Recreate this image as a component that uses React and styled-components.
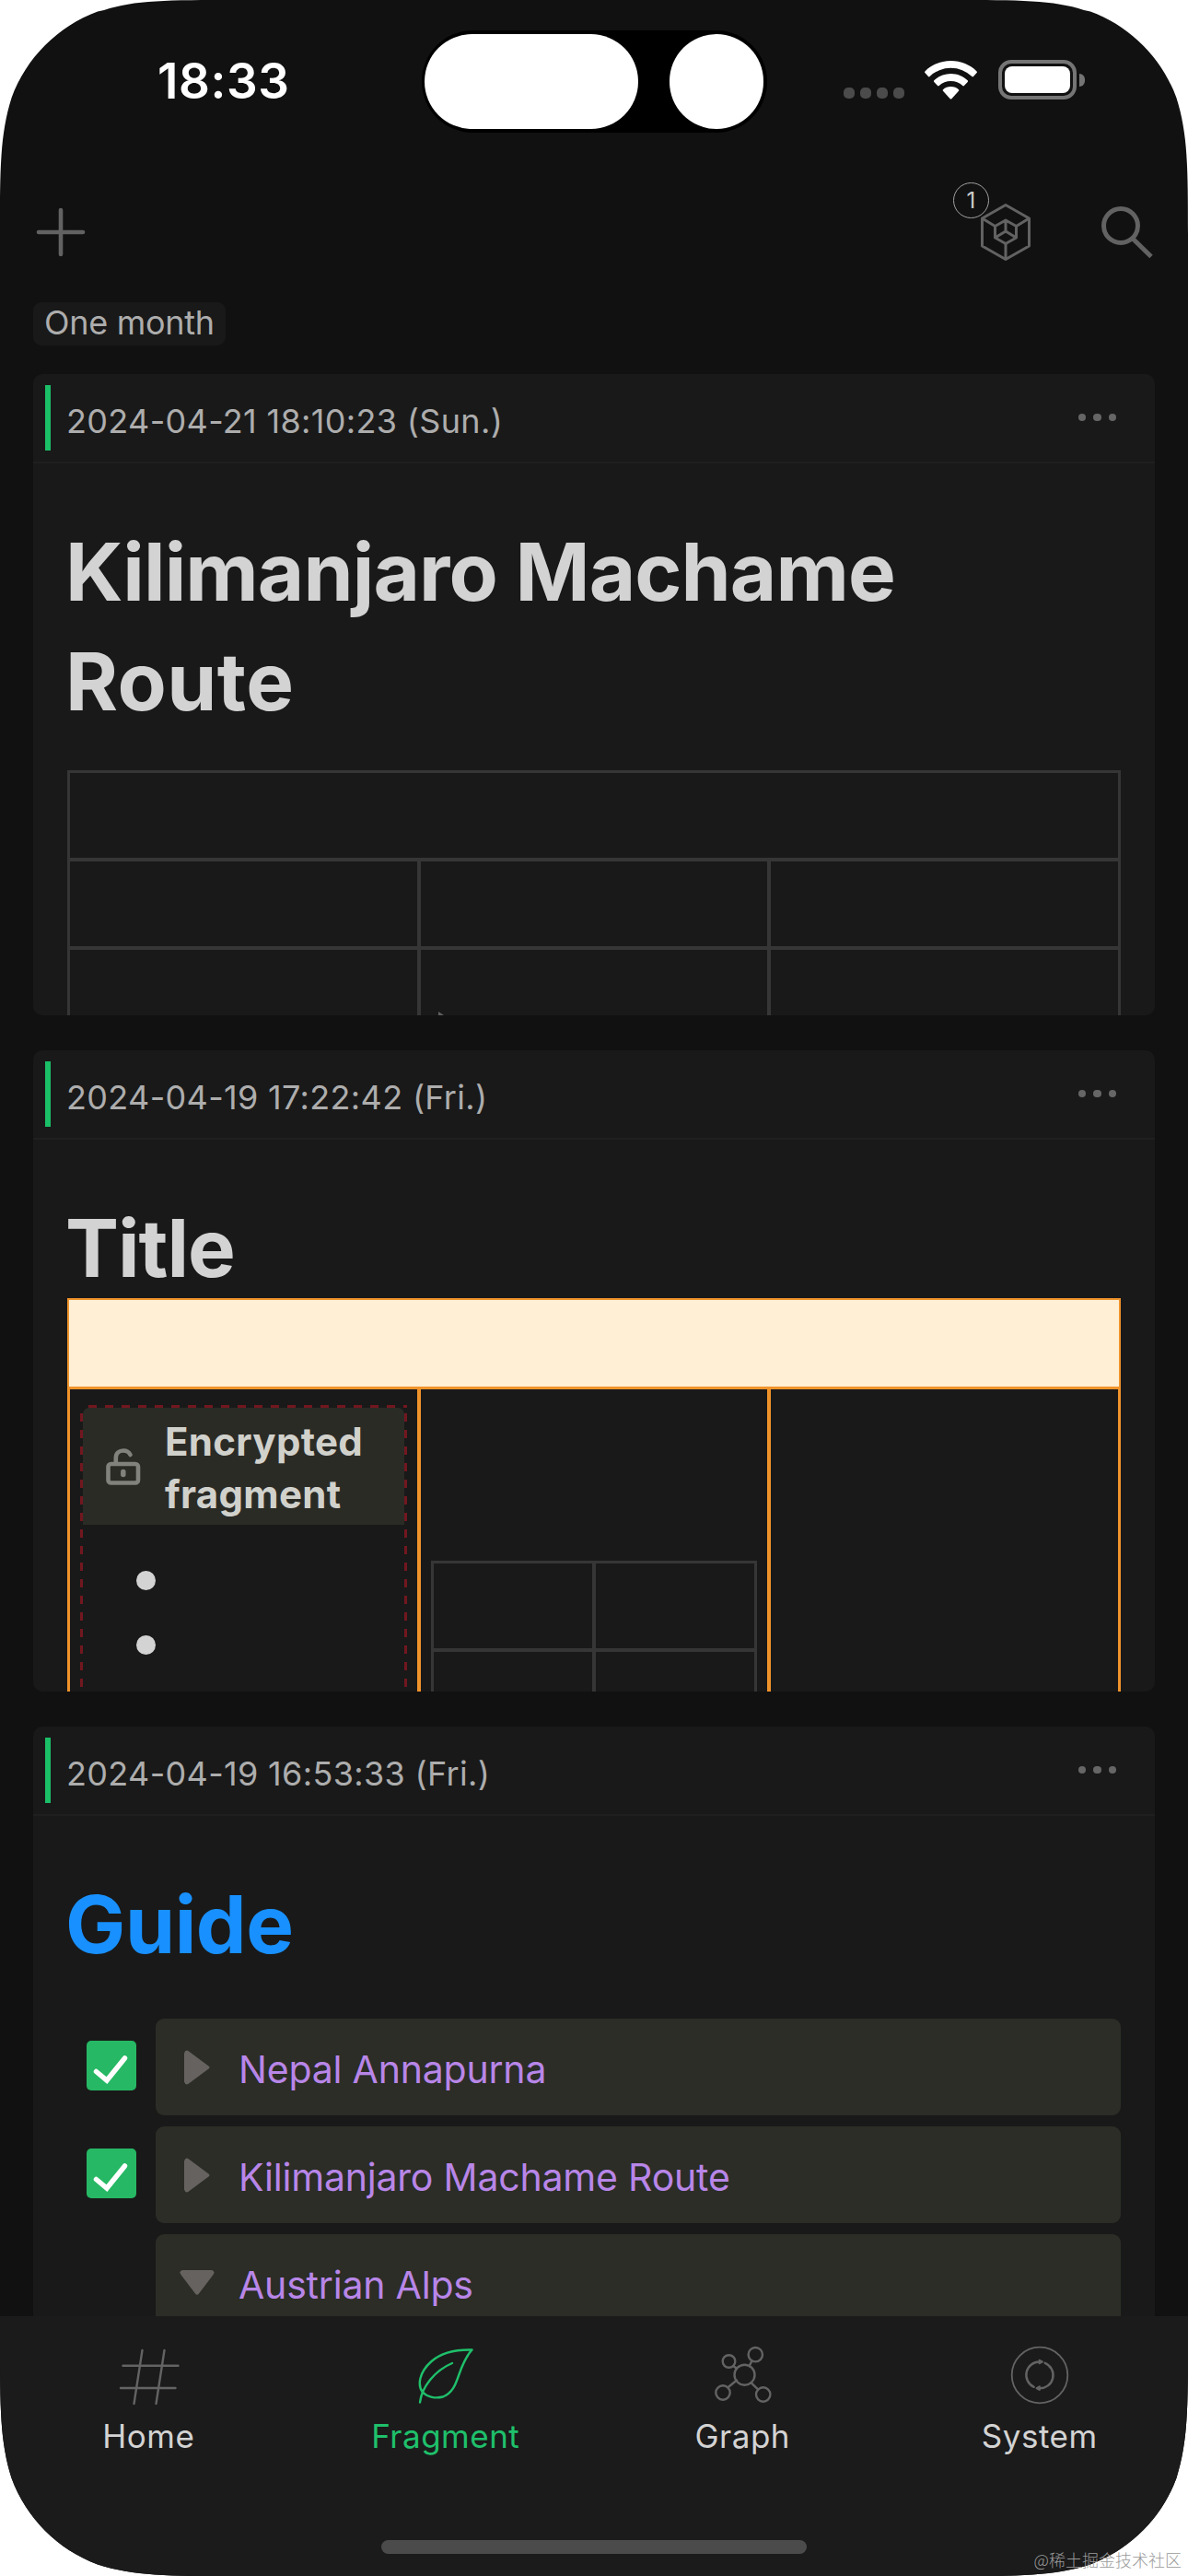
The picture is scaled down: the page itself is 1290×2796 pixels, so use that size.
import React from 'react';
import styled, { createGlobalStyle } from 'styled-components';

const GlobalStyle = createGlobalStyle`
  * {
    box-sizing: border-box;
  }

  body {
    margin: 0;
    background: #ffffff;
    font-family: Inter, 'Noto Sans CJK SC', sans-serif;
  }

  svg {
    display: block;
  }
`;

const Stage = styled.div`
  position: relative;
  width: 1290px;
  height: 2796px;
  overflow: hidden;
`;

const Screen = styled.div`
  display: flex;
  flex-direction: column;
  width: 1290px;
  height: 2796px;
  overflow: hidden;
  background: #111111;
  clip-path: path(
    'M257 0H1033C1107 0 1144 0 1177 11L1184 12.6C1227 28.4 1261.6 63 1277.4 106C1290 146 1290 183 1290 257V2539C1290 2613 1290 2650 1277.4 2690C1261.6 2733 1227 2767.6 1184 2783.4C1144 2796 1107 2796 1033 2796H257C183 2796 146 2796 106 2783.4C63 2767.6 28.4 2733 12.6 2690C0 2650 0 2613 0 2539V257C0 183 0 146 12.6 106C28.4 63 63 28.4 106 12.6L113 11C146 0 183 0 257 0Z'
  );
`;

const StatusBar = styled.div`
  display: grid;
  grid-template-columns: 458px 375px 1fr;
  height: 144px;
  padding-top: 33px;
`;

const Time = styled.div`
  padding-left: 171px;
  font-size: 53px;
  font-weight: 600;
  line-height: 110px;
  letter-spacing: 0.6px;
  color: #ffffff;
`;

const Island = styled.div`
  display: flex;
  align-items: center;
  justify-content: space-between;
  height: 111px;
  padding: 0 4px 0 3px;
  border-radius: 56px;
  background: #000000;
`;

const IslandPart = styled.div`
  width: ${({ $width }) => $width}px;
  height: 103px;
  border-radius: 52px;
  background: #ffffff;
`;

const StatusIcons = styled.div`
  display: flex;
  align-items: flex-end;
  height: 75px;
  padding-left: 83px;
`;

const SignalDots = styled.div`
  display: flex;
  gap: 6px;
  margin: 0 22px 1px 0;
`;

const SignalDot = styled.span`
  width: 12px;
  height: 12px;
  border-radius: 5px;
  background: #4b4b4b;
`;

const Battery = styled.div`
  display: flex;
  align-items: center;
  gap: 3px;
  margin-left: 23px;
`;

const BatteryCase = styled.div`
  width: 85px;
  height: 43px;
  padding: 3px;
  border: 4px solid #757575;
  border-radius: 14px;
`;

const BatteryLevel = styled.div`
  height: 100%;
  border-radius: 8px;
  background: #ffffff;
`;

const BatteryTip = styled.div`
  width: 6px;
  height: 14px;
  border-radius: 0 6px 6px 0;
  background: #757575;
`;

const Toolbar = styled.div`
  display: flex;
  align-items: center;
  height: 184px;
  padding: 56px 36px 24px;
`;

const Spacer = styled.div`
  flex: 1;
`;

const Inbox = styled.div`
  position: relative;
  margin-right: 77px;
`;

const Badge = styled.span`
  position: absolute;
  left: -30px;
  top: -22px;
  width: 39px;
  height: 39px;
  border: 1px solid #a0a0a0;
  border-radius: 50%;
  background: #111111;
  font-size: 24px;
  line-height: 37px;
  text-align: center;
  color: #cccccc;
`;

const Filter = styled.div`
  align-self: flex-start;
  height: 47px;
  margin: 0 0 31px 36px;
  padding: 0 12px;
  border-radius: 9px;
  background: #191919;
  font-size: 36px;
  line-height: 45px;
  letter-spacing: -0.3px;
  color: #adadad;
`;

const Feed = styled.div`
  display: flex;
  flex: 1;
  flex-direction: column;
  gap: 38px;
  min-height: 0;
  padding: 0 36px;
  overflow: hidden;
`;

const Card = styled.article`
  flex-shrink: 0;
  height: 696px;
  border-radius: 10px;
  background: #191919;
  overflow: hidden;
`;

const CardHeader = styled.header`
  display: flex;
  align-items: center;
  height: 97px;
  padding: 0 42px 1px 13px;
  border-bottom: 2px solid #1f1f1f;
`;

const Marker = styled.span`
  width: 6px;
  height: 71px;
  background: #1abf67;
`;

const CreatedAt = styled.time`
  flex: 1;
  padding: 7px 0 0 17px;
  font-size: 36px;
  letter-spacing: 0.33px;
  color: #adadad;
`;

const More = styled.span`
  display: flex;
  gap: 8px;
`;

const MoreDot = styled.i`
  width: 8.5px;
  height: 8.5px;
  border-radius: 50%;
  background: #666666;
`;

const CardBody = styled.div`
  padding: 58px 37px 0;
`;

const H1 = styled.h1`
  margin: 0 0 ${({ $gap = 37 }) => $gap}px -2px;
  font-size: 87px;
  font-weight: 700;
  line-height: 119px;
  letter-spacing: ${({ $tracking = -0.9 }) => $tracking}px;
  color: ${({ $color = '#d3d3d3' }) => $color};
`;

const LastLine = styled.span`
  display: block;
  letter-spacing: 0.4px;
`;

const Table = styled.div`
  display: grid;
  grid-template-columns: repeat(${({ $columns }) => $columns}, 1fr);
  grid-auto-rows: 92px;
  gap: 4px;
  padding: 3px;
  margin-top: ${({ $top = 0 }) => $top}px;
  background: #363636;
`;

const Cell = styled.div`
  grid-column: span ${({ $span = 1 }) => $span};
  background: #191919;
  overflow: hidden;
`;

const ClippedArrow = styled.div`
  width: 0;
  height: 0;
  margin: 67px 0 0 19px;
  border-left: 27px solid #606060;
  border-top: 18px solid transparent;
  border-bottom: 18px solid transparent;
`;

const OrangeTable = styled.div`
  background: #f0932b;
`;

const OrangeHead = styled.div`
  height: 96px;
  border: solid #f0932b;
  border-width: 2px 2px 0;
  background: #ffefd5;
`;

const OrangeRow = styled.div`
  display: grid;
  grid-template-columns: repeat(3, 1fr);
  gap: 4px;
  height: 520px;
  padding: 3px;
`;

const OrangeCell = styled.div`
  padding: 17px 11px 0;
  background: #191919;
`;

const dash = (angle) =>
  `repeating-linear-gradient(${angle}, transparent 0 9px, #72171f 9px 18px)`;

const Encrypted = styled.div`
  height: 480px;
  padding: 3px 3px 0;
  background: ${dash('90deg')} 0 0 / 100% 3px no-repeat,
    ${dash('180deg')} 0 0 / 3px 100% no-repeat,
    ${dash('180deg')} 100% 0 / 3px 100% no-repeat;
`;

const EncryptedTitle = styled.div`
  display: flex;
  align-items: center;
  gap: 26px;
  height: 127px;
  padding: 2px 0 0 25px;
  border-radius: 7px 7px 0 0;
  background: #2b2b26;
  font-size: 42px;
  font-weight: 650;
  line-height: 57px;
  letter-spacing: 0.3px;
  color: #d1d1cc;
`;

const Bullets = styled.div`
  display: flex;
  flex-direction: column;
  gap: 49px;
  padding: 50px 0 0 58px;
`;

const Bullet = styled.i`
  width: 21px;
  height: 21px;
  border-radius: 50%;
  background: #d3d3d3;
`;

const Outline = styled.div`
  display: flex;
  flex-direction: column;
  gap: 12px;
  margin-top: 43px;
`;

const OutlineRow = styled.div`
  display: grid;
  grid-template-columns: 96px 1fr;
`;

const Checkbox = styled.span`
  width: 54px;
  height: 54px;
  margin: 24px 0 0 21px;
  border-radius: 5px;
  background: #26b864;
`;

const Toggle = styled.div`
  grid-column: 2;
  display: flex;
  align-items: center;
  height: 105px;
  border-radius: 9px;
  background: #2b2d26;
`;

const ToggleIcon = styled.span`
  display: flex;
  justify-content: center;
  width: 90px;
`;

const Link = styled.a`
  padding-top: 4px;
  font-size: 41px;
  letter-spacing: -0.2px;
  color: #b886e8;
`;

const TabBar = styled.nav`
  display: grid;
  grid-template-columns: repeat(4, 1fr);
  height: 243px;
  padding-top: 31px;
  background: #1b1b1b;
`;

const Tab = styled.div`
  display: flex;
  flex-direction: column;
  align-items: center;
  gap: 7px;
  font-size: 35px;
  line-height: 44px;
  letter-spacing: 0.5px;
  color: ${({ $active }) => ($active ? '#1fc06b' : '#d3d3d3')};

  svg {
    color: ${({ $active }) => ($active ? '#1fc06b' : '#636363')};
  }
`;

const HomeIndicator = styled.div`
  display: flex;
  justify-content: center;
  height: 39px;
  background: #1b1b1b;

  &::before {
    content: '';
    width: 462px;
    height: 15px;
    border-radius: 8px;
    background: #4b4b4b;
  }
`;

const Watermark = styled.div`
  position: absolute;
  right: 7px;
  bottom: 6px;
  font-family: 'Noto Sans CJK SC', sans-serif;
  font-size: 18px;
  font-weight: 300;
  line-height: 24px;
  color: #9a9a9a;
`;

const WifiIcon = () => (
  <svg width="57" height="42" viewBox="0 0 57 42" fill="#fff">
    <path d="M28.5 0C39.5 0 49.5 4.200 56.600 11.400Q57.300 12.200 56.600 13L53 17Q52.200 17.800 51.400 17A33 33 0 0 0 5.600 17Q4.800 17.800 4 17L0.400 13Q-0.300 12.200 0.400 11.400C7.500 4.200 17.500 0 28.500 0Z" />
    <path d="M28.500 14C35.500 14 42 16.800 46.700 21.300Q47.500 22.100 46.700 22.900L42.900 27Q42.100 27.800 41.300 27A19 19 0 0 0 15.700 27Q14.900 27.800 14.100 27L10.300 22.900Q9.500 22.100 10.300 21.300C15 16.800 21.500 14 28.500 14Z" />
    <path d="M28.500 28C31.800 28 34.800 29.200 37 31.200Q37.700 32 37 32.800L29.300 41.200Q28.500 42 27.700 41.200L20 32.800Q19.300 32 20 31.200C22.200 29.200 25.200 28 28.500 28Z" />
  </svg>
);

const PlusIcon = () => (
  <svg width="60" height="60" viewBox="0 0 60 60" stroke="#626262" strokeWidth="4.6" strokeLinecap="round">
    <path d="M30 6V54M6 30H54" />
  </svg>
);

const CubeIcon = () => (
  <svg
    width="54"
    height="64"
    viewBox="0 0 54 64"
    fill="none"
    stroke="#626262"
    strokeWidth="3"
    strokeLinejoin="round"
    strokeLinecap="round"
  >
    <path d="M27 2.500L52.500 17V47L27 61.500L1.500 47V17ZM1.500 17L15.500 25.500M52.500 17L38.500 25.500M27 61.500V44.500" />
    <path d="M27 19L38.500 25.500V38L27 44.500L15.500 38V25.500ZM27 19V31L38.500 38M27 31L15.500 38" />
  </svg>
);

const SearchIcon = () => (
  <svg width="58" height="58" viewBox="0 0 58 58" fill="none" stroke="#626262" strokeWidth="5">
    <circle cx="21" cy="22" r="18.5" />
    <path d="M34 36L54 55.500" />
  </svg>
);

const LockIcon = () => (
  <svg width="38" height="41" viewBox="0 0 38 41" fill="none" stroke="#82827d" strokeWidth="4.6" strokeLinecap="round">
    <rect x="2.5" y="17" width="32.5" height="20.5" rx="3" />
    <path d="M10.800 16V10.500C10.800 5 14.500 2.500 19 2.500C22.500 2.500 25 4 26.500 7" />
    <path d="M18.800 25.500V28.500" strokeWidth="5.5" />
  </svg>
);

const CheckIcon = () => (
  <svg width="54" height="54" viewBox="0 0 54 54" fill="none" stroke="#fff" strokeWidth="5.5" strokeLinecap="round">
    <path d="M10.500 33.500L22 43L41.500 19" />
  </svg>
);

const TriangleIcon = ({ open }) =>
  open ? (
    <svg width="38" height="28" viewBox="0 0 38 28" fill="#66625f">
      <path d="M3 0H35Q39 1 36.500 5L21 25.500Q19 28 17 25.500L1.500 5Q-1 1 3 0Z" />
    </svg>
  ) : (
    <svg width="28" height="38" viewBox="0 0 28 38" fill="#66625f">
      <path d="M0 3.500Q1.500 -1 5 1.500L26.500 17.500Q28.500 19 26.500 20.500L5 36.500Q1.500 39 0 34.500Z" />
    </svg>
  );

const tabIcon = {
  width: 70,
  height: 70,
  viewBox: '0 0 70 70',
  fill: 'none',
  stroke: 'currentColor',
  strokeWidth: 2.4,
  strokeLinecap: 'round',
  strokeLinejoin: 'round',
};

const HashIcon = () => (
  <svg {...tabIcon}>
    <path d="M28.500 6L19.500 64M52.500 6L43.500 64M7.500 22.700H67.500M5 47H64.500" />
  </svg>
);

const LeafIcon = () => (
  <svg {...tabIcon}>
    <path d="M63.500 5.500C43 5 28 10.500 19.500 18C6 30 4 44 10 51.500C15 57 24 58.500 32 56.500C51 49 46 25 63.500 5.500Z" />
    <path d="M7 62.500C9 46 23 28 42 20" />
  </svg>
);

const GraphIcon = () => (
  <svg {...tabIcon}>
    <circle cx="37.5" cy="32.7" r="11" />
    <circle cx="49.3" cy="10.7" r="7.7" />
    <circle cx="20.5" cy="18" r="6.8" />
    <circle cx="14" cy="52" r="7.7" />
    <circle cx="57.7" cy="54" r="7.7" />
    <path d="M45.500 17.400L42.700 23M25.200 23L29 25.800M19.500 46.200L29 38.500M44.500 41.200L52.200 48.700" />
  </svg>
);

const SyncIcon = () => (
  <svg {...tabIcon}>
    <circle cx="35" cy="33" r="30.3" strokeWidth="1.8" />
    <path d="M28.700 45.800A14.300 14.300 0 0 1 35 18.500M40.700 19.800A14.300 14.300 0 0 1 34.500 47.300" />
    <path
      d="M34.500 16.500L38.200 18.500L34.500 20.500ZM35 45L31.300 47.200L35 49.200Z"
      fill="currentColor"
      strokeWidth="1.6"
    />
  </svg>
);

const tabs = [
  { label: 'Home', Icon: HashIcon },
  { label: 'Fragment', Icon: LeafIcon, active: true },
  { label: 'Graph', Icon: GraphIcon },
  { label: 'System', Icon: SyncIcon },
];

const guides = [
  { title: 'Nepal Annapurna', done: true },
  { title: 'Kilimanjaro Machame Route', done: true },
  { title: 'Austrian Alps', open: true },
];

const Fragment = ({ date, children }) => (
  <Card>
    <CardHeader>
      <Marker />
      <CreatedAt>{date}</CreatedAt>
      <More>
        <MoreDot />
        <MoreDot />
        <MoreDot />
      </More>
    </CardHeader>
    <CardBody>{children}</CardBody>
  </Card>
);

const App = () => (
  <Stage>
    <GlobalStyle />
    <Screen>
      <StatusBar>
        <Time>18:33</Time>
        <Island>
          <IslandPart $width={232} />
          <IslandPart $width={102} />
        </Island>
        <StatusIcons>
          <SignalDots>
            <SignalDot />
            <SignalDot />
            <SignalDot />
            <SignalDot />
          </SignalDots>
          <WifiIcon />
          <Battery>
            <BatteryCase>
              <BatteryLevel />
            </BatteryCase>
            <BatteryTip />
          </Battery>
        </StatusIcons>
      </StatusBar>

      <Toolbar>
        <PlusIcon />
        <Spacer />
        <Inbox>
          <CubeIcon />
          <Badge>1</Badge>
        </Inbox>
        <SearchIcon />
      </Toolbar>

      <Filter>One month</Filter>

      <Feed>
        <Fragment date="2024-04-21 18:10:23 (Sun.)">
          <H1>
            Kilimanjaro Machame <LastLine>Route</LastLine>
          </H1>
          <Table $columns={3}>
            <Cell $span={3} />
            <Cell />
            <Cell />
            <Cell />
            <Cell />
            <Cell>
              <ClippedArrow />
            </Cell>
            <Cell />
          </Table>
        </Fragment>

        <Fragment date="2024-04-19 17:22:42 (Fri.)">
          <H1 $gap={-5} $tracking={-1.1}>
            Title
          </H1>
          <OrangeTable>
            <OrangeHead />
            <OrangeRow>
              <OrangeCell>
                <Encrypted>
                  <EncryptedTitle>
                    <LockIcon />
                    <span>
                      Encrypted
                      <br />
                      fragment
                    </span>
                  </EncryptedTitle>
                  <Bullets>
                    <Bullet />
                    <Bullet />
                  </Bullets>
                </Encrypted>
              </OrangeCell>
              <OrangeCell>
                <Table $columns={2} $top={169}>
                  <Cell />
                  <Cell />
                  <Cell />
                  <Cell />
                </Table>
              </OrangeCell>
              <OrangeCell />
            </OrangeRow>
          </OrangeTable>
        </Fragment>

        <Fragment date="2024-04-19 16:53:33 (Fri.)">
          <H1 $color="#1890ff" $tracking={-0.4}>
            Guide
          </H1>
          <Outline>
            {guides.map(({ title, done, open }) => (
              <OutlineRow key={title}>
                {done && (
                  <Checkbox>
                    <CheckIcon />
                  </Checkbox>
                )}
                <Toggle>
                  <ToggleIcon>
                    <TriangleIcon open={open} />
                  </ToggleIcon>
                  <Link>{title}</Link>
                </Toggle>
              </OutlineRow>
            ))}
          </Outline>
        </Fragment>
      </Feed>

      <TabBar>
        {tabs.map(({ label, Icon, active }) => (
          <Tab key={label} $active={active}>
            <Icon />
            {label}
          </Tab>
        ))}
      </TabBar>
      <HomeIndicator />
    </Screen>
    <Watermark>@稀土掘金技术社区</Watermark>
  </Stage>
);

export default App;
